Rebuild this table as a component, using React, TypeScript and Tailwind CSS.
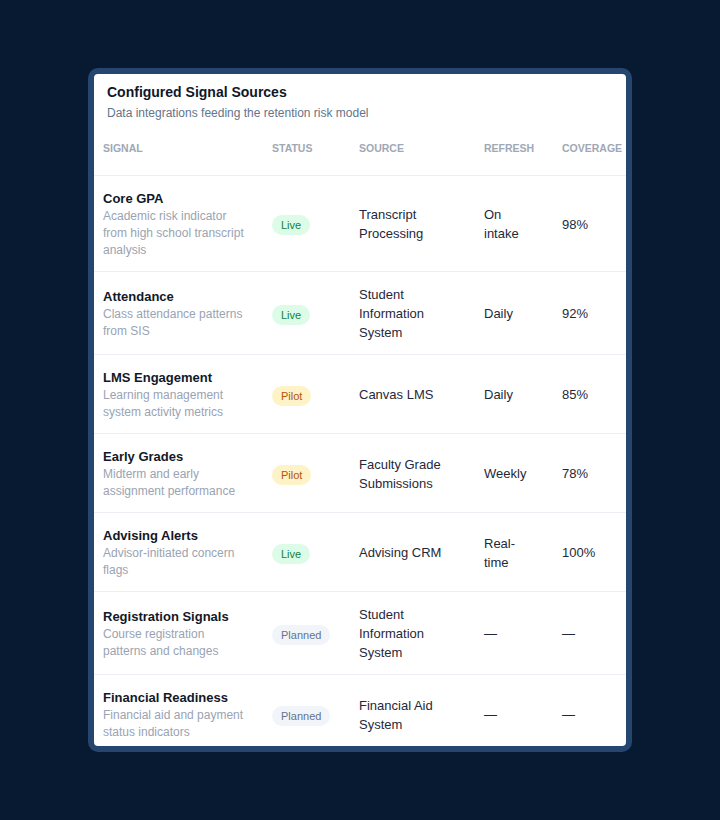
import React from "react";

type Status = "Live" | "Pilot" | "Planned";

const rows: {
  name: string;
  desc: string;
  status: Status;
  source: string;
  refresh: string;
  coverage: string;
}[] = [
  {
    name: "Core GPA",
    desc: "Academic risk indicator from high school transcript analysis",
    status: "Live",
    source: "Transcript Processing",
    refresh: "On intake",
    coverage: "98%",
  },
  {
    name: "Attendance",
    desc: "Class attendance patterns from SIS",
    status: "Live",
    source: "Student Information System",
    refresh: "Daily",
    coverage: "92%",
  },
  {
    name: "LMS Engagement",
    desc: "Learning management system activity metrics",
    status: "Pilot",
    source: "Canvas LMS",
    refresh: "Daily",
    coverage: "85%",
  },
  {
    name: "Early Grades",
    desc: "Midterm and early assignment performance",
    status: "Pilot",
    source: "Faculty Grade Submissions",
    refresh: "Weekly",
    coverage: "78%",
  },
  {
    name: "Advising Alerts",
    desc: "Advisor-initiated concern flags",
    status: "Live",
    source: "Advising CRM",
    refresh: "Real-time",
    coverage: "100%",
  },
  {
    name: "Registration Signals",
    desc: "Course registration patterns and changes",
    status: "Planned",
    source: "Student Information System",
    refresh: "—",
    coverage: "—",
  },
  {
    name: "Financial Readiness",
    desc: "Financial aid and payment status indicators",
    status: "Planned",
    source: "Financial Aid System",
    refresh: "—",
    coverage: "—",
  },
];

function Badge({ status }: { status: Status }) {
  const cls =
    status === "Live"
      ? "bg-[#dcfce7] text-[#15803d]"
      : status === "Pilot"
      ? "bg-[#fef3c7] text-[#b45309]"
      : "bg-[#f1f5f9] text-[#64748b]";
  return (
    <span
      className={`inline-flex items-center rounded-full px-[9px] py-[2px] text-[11px] leading-4 font-medium ${cls}`}
    >
      {status}
    </span>
  );
}

export default function App() {
  return (
    <div
      className="min-h-screen w-full bg-[#071a31] flex items-center justify-center"
      style={{ fontFamily: '"Liberation Sans", Arial, sans-serif' }}
    >
      <div className="rounded-[10px] bg-[#25466f] p-[6px]">
        <div className="w-[532px] h-[672px] overflow-hidden rounded-[4px] bg-white">
          <div className="px-[13px] pt-[8px]">
            <h2 className="text-[14px] leading-5 font-bold text-[#0f172a]">
              Configured Signal Sources
            </h2>
            <p className="mt-[3px] text-[12px] leading-4 text-[#64748b]">
              Data integrations feeding the retention risk model
            </p>
          </div>
          <table className="table-fixed w-[534px] border-collapse text-left">
            <colgroup>
              <col className="w-[169px]" />
              <col className="w-[87px]" />
              <col className="w-[125px]" />
              <col className="w-[78px]" />
              <col className="w-[75px]" />
            </colgroup>
            <thead>
              <tr className="border-b border-[#eceff3]">
                {["Signal", "Status", "Source", "Refresh", "Coverage"].map((h) => (
                  <th
                    key={h}
                    className="pl-[9px] pr-[4px] py-[19px] text-[10.5px] leading-4 font-bold uppercase text-[#a0a8b5] whitespace-nowrap"
                  >
                    {h}
                  </th>
                ))}
              </tr>
            </thead>
            <tbody>
              {rows.map((r) => (
                <tr key={r.name} className="border-b border-[#eceff3] align-middle">
                  <td className="pl-[9px] pr-[14px] pt-[13px] pb-[12px]">
                    <div className="text-[13px] leading-[19px] font-bold text-[#111827]">
                      {r.name}
                    </div>
                    <div className="text-[12px] leading-[17px] text-[#9aa3b2]">{r.desc}</div>
                  </td>
                  <td className="pl-[9px] pr-[9px] pt-[13px] pb-[12px]">
                    <Badge status={r.status} />
                  </td>
                  <td className="pl-[9px] pr-[9px] pt-[13px] pb-[12px] text-[13px] leading-[19px] text-[#1e293b]">
                    {r.source}
                  </td>
                  <td className="pl-[9px] pr-[20px] pt-[13px] pb-[12px] text-[13px] leading-[19px] text-[#1e293b]">
                    {r.refresh}
                  </td>
                  <td className="pl-[9px] pr-[9px] pt-[13px] pb-[12px] text-[13px] leading-[19px] text-[#1e293b]">
                    {r.coverage}
                  </td>
                </tr>
              ))}
            </tbody>
          </table>
        </div>
      </div>
    </div>
  );
}
